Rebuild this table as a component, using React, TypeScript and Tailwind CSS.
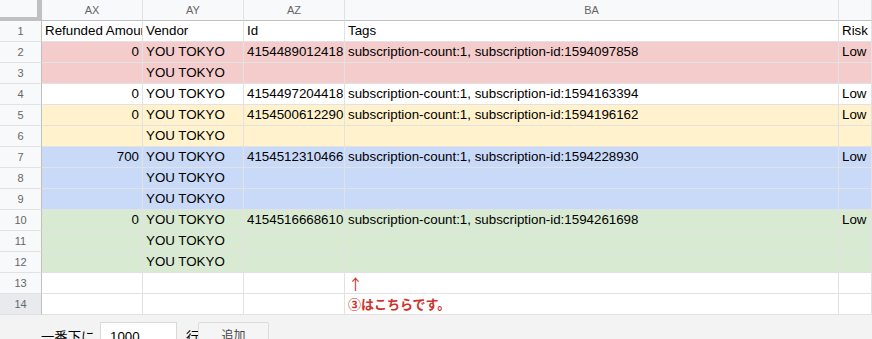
type Row = {
  n: number;
  bg: string;
  amount?: string;
  vendor?: string;
  id?: string;
  tags?: string;
  risk?: string;
  note?: React.ReactNode;
};

const PINK = 'bg-[#f4cccc]';
const YELLOW = 'bg-[#fff2cc]';
const BLUE = 'bg-[#c9daf8]';
const GREEN = 'bg-[#d9ead3]';
const WHITE = 'bg-white';

const rows: Row[] = [
  { n: 1, bg: WHITE, amount: 'Refunded Amount', vendor: 'Vendor', id: 'Id', tags: 'Tags', risk: 'Risk Level' },
  { n: 2, bg: PINK, amount: '0', vendor: 'YOU TOKYO', id: '4154489012418', tags: 'subscription-count:1, subscription-id:1594097858', risk: 'Low' },
  { n: 3, bg: PINK, vendor: 'YOU TOKYO' },
  { n: 4, bg: WHITE, amount: '0', vendor: 'YOU TOKYO', id: '4154497204418', tags: 'subscription-count:1, subscription-id:1594163394', risk: 'Low' },
  { n: 5, bg: YELLOW, amount: '0', vendor: 'YOU TOKYO', id: '4154500612290', tags: 'subscription-count:1, subscription-id:1594196162', risk: 'Low' },
  { n: 6, bg: YELLOW, vendor: 'YOU TOKYO' },
  { n: 7, bg: BLUE, amount: '700', vendor: 'YOU TOKYO', id: '4154512310466', tags: 'subscription-count:1, subscription-id:1594228930', risk: 'Low' },
  { n: 8, bg: BLUE, vendor: 'YOU TOKYO' },
  { n: 9, bg: BLUE, vendor: 'YOU TOKYO' },
  { n: 10, bg: GREEN, amount: '0', vendor: 'YOU TOKYO', id: '4154516668610', tags: 'subscription-count:1, subscription-id:1594261698', risk: 'Low' },
  { n: 11, bg: GREEN, vendor: 'YOU TOKYO' },
  { n: 12, bg: GREEN, vendor: 'YOU TOKYO' },
  {
    n: 13,
    bg: WHITE,
    note: (
      <span className="text-[#d0302b] text-[15px]" style={{ fontFamily: '"Noto Sans CJK JP", sans-serif' }}>
        ↑
      </span>
    ),
  },
  { n: 14, bg: WHITE, note: <span className="text-[#d0302b] font-bold text-[13px]">③はこちらです。</span> },
];

const cell = 'h-[21px] border-r border-b border-[#e2e2e2] overflow-hidden whitespace-nowrap px-[3px] flex items-center leading-none';

const App = () => {
  return (
    <div
      className="w-[872px] h-[339px] overflow-hidden bg-[#f3f3f3] text-[13.33px] text-black"
      style={{ fontFamily: '"Liberation Sans", Arial, "Noto Sans CJK JP", sans-serif' }}>
      {/* column letters */}
      <div className="flex h-[21px] bg-[#f8f9fa] text-[11px] text-[#666]">
        <div className="w-[42px] shrink-0 border-r-[5px] border-b-[4px] border-[#c0c0c0] bg-[#f8f9fa]" />
        {[
          ['AX', 'w-[101px]'],
          ['AY', 'w-[101px]'],
          ['AZ', 'w-[101px]'],
          ['BA', 'w-[494px]'],
          ['', 'flex-1'],
        ].map(([label, w]) => (
          <div
            key={label || 'next'}
            className={`${w} shrink-0 flex items-center justify-center border-r border-[#e2e2e2] border-b border-b-[#c0c0c0]`}>
            {label}
          </div>
        ))}
      </div>

      {rows.map((r) => (
        <div key={r.n} className="flex">
          <div
            className={`w-[42px] shrink-0 h-[21px] flex items-center justify-center text-[11px] text-[#666] border-r border-r-[#c0c0c0] border-b border-[#e2e2e2] ${
              r.n === 14 ? 'bg-[#e8eaed]' : 'bg-[#f8f9fa]'
            }`}>
            {r.n}
          </div>
          <div className={`w-[101px] shrink-0 ${cell} ${r.bg} ${r.n === 1 ? 'justify-start' : 'justify-end'}`}>
            {r.amount}
          </div>
          <div className={`w-[101px] shrink-0 ${cell} ${r.bg}`}>{r.vendor}</div>
          <div className={`w-[101px] shrink-0 ${cell} ${r.bg}`}>{r.id}</div>
          <div className={`w-[494px] shrink-0 ${cell} ${r.bg}`}>{r.note ?? r.tags}</div>
          <div className={`flex-1 ${cell} ${r.bg}`}>
            {r.risk === 'Risk Level' ? (
              <>
                Risk&nbsp;<span className="text-[#c99a2e]">Level</span>
              </>
            ) : (
              r.risk
            )}
          </div>
        </div>
      ))}

      {/* add-rows footer */}
      <div className="flex items-start pt-[7px] pl-[41px]">
        <span className="mt-[6px] w-[59px]">一番下に</span>
        <input
          defaultValue="1000"
          className="w-[77px] h-[28px] bg-white border border-[#d9d9d9] px-[9px] text-[13.33px] outline-none"
        />
        <span className="mt-[6px] ml-[9px] w-[12px]">行</span>
        <button className="h-[28px] w-[71px] rounded-[2px] border border-[#dcdcdc] bg-[#f5f5f5] text-[12px] text-[#444]">
          追加
        </button>
      </div>
    </div>
  );
};

export default App;
